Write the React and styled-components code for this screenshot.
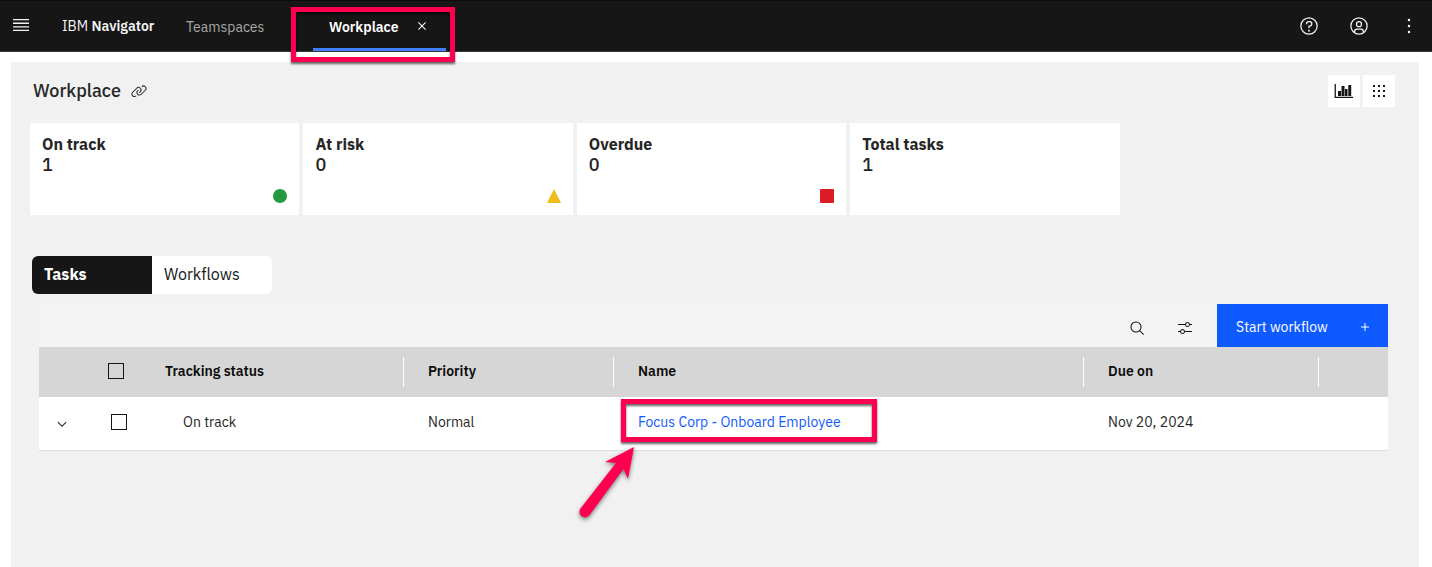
import React, { useState } from "react";
import styled, { createGlobalStyle } from "styled-components";

const GlobalStyle = createGlobalStyle`
  *, *::before, *::after { box-sizing: border-box; }
  body {
    margin: 0;
    background: #ffffff;
    color: #262626;
    font-family: "IBM Plex Sans", "Noto Sans", sans-serif;
    font-size: 14px;
    line-height: 20px;
  }
  button, input { font: inherit; color: inherit; }
  button { padding: 0; border: 0; background: none; cursor: pointer; }
  a { color: inherit; text-decoration: none; }
  h1, h2, p { margin: 0; }
  svg { display: block; fill: currentColor; }
`;

const Header = styled.header`
  display: flex;
  align-items: center;
  height: 52px;
  padding: 0 13px;
  background: #161616;
  border-top: 1px solid #0b0b0b;
  border-bottom: 1px solid #393939;
  color: #f4f4f4;
`;

const MenuButton = styled.button`
  padding-bottom: 2px;
`;

const Brand = styled.a`
  width: 124px;
  margin-left: 33px;
  white-space: nowrap;
  strong { font-weight: 600; }
`;

const Nav = styled.nav`
  display: flex;
  flex: 1;
  align-self: stretch;
`;

const Tab = styled.div`
  position: relative;
  display: flex;
  align-items: center;
  justify-content: space-between;
  width: ${(p) => (p.$active ? 133 : 127)}px;
  padding: ${(p) => (p.$active ? "2px 16px 0" : "2px 0 0")};
  color: ${(p) => (p.$active ? "#ffffff" : "#a8a8a8")};
  font-weight: ${(p) => (p.$active ? 600 : 400)};
  box-shadow: ${(p) => (p.$active ? "inset 0 -3px #4080ff" : "none")};
`;

const CloseButton = styled.button`
  padding-bottom: 2px;
`;

const HeaderActions = styled.div`
  display: flex;
  gap: 30px;
`;

const Highlight = styled.span`
  position: absolute;
  inset: ${(p) => p.$inset};
  border: 5px solid #ff0050;
  filter: drop-shadow(0 2px 1px rgba(0, 0, 0, 0.6));
  pointer-events: none;
`;

const Arrow = styled.svg`
  position: absolute;
  top: 45px;
  left: -60px;
  filter: drop-shadow(0 2px 2px rgba(0, 0, 0, 0.5));
  pointer-events: none;
`;

const Panel = styled.main`
  min-height: calc(100vh - 62px);
  margin: 10px 13px 0 11px;
  padding: 13px 24px 24px 19px;
  background: #f1f1f1;
`;

const TitleBar = styled.div`
  display: flex;
  align-items: center;
  padding-left: 3px;
  gap: 10px;
`;

const Title = styled.h1`
  font-size: 18px;
  line-height: 24px;
  font-weight: 500;
`;

const ViewButtons = styled.div`
  display: flex;
  gap: 3px;
  margin-left: auto;
`;

const ViewButton = styled.button`
  display: grid;
  place-items: center;
  width: 32px;
  height: 32px;
  background: #ffffff;
  color: #161616;
`;

const Cards = styled.div`
  display: grid;
  grid-template-columns: repeat(5, 1fr);
  gap: 4px;
  margin: 16px 2px 0 0;
`;

const Card = styled.section`
  display: flex;
  flex-direction: column;
  height: 92px;
  padding: 12px;
  background: #ffffff;
  h2 { margin-bottom: 2px; font-size: 16px; line-height: 18px; font-weight: 700; }
  p { font-size: 18px; font-weight: 500; }
  svg { margin: auto 0 0 auto; }
`;

const Switcher = styled.div`
  display: inline-flex;
  margin: 41px 0 9px 2px;
  border-radius: 6px;
  overflow: hidden;
`;

const SwitchButton = styled.button`
  width: 120px;
  height: 38px;
  padding: 0 12px 2px;
  text-align: left;
  font-size: 16px;
  background: ${(p) => (p.$selected ? "#161616" : "#ffffff")};
  color: ${(p) => (p.$selected ? "#ffffff" : "#161616")};
  font-weight: ${(p) => (p.$selected ? 700 : 400)};
`;

const TaskArea = styled.section`
  margin: 0 7px 0 9px;
`;

const Toolbar = styled.div`
  display: flex;
  justify-content: flex-end;
  height: 44px;
  padding-top: 1px;
  background: #f4f4f4;
`;

const ToolButton = styled.button`
  display: grid;
  place-items: center;
  width: 48px;
  padding-top: 4px;
  color: #161616;
`;

const StartButton = styled.button`
  display: flex;
  align-items: center;
  justify-content: space-between;
  width: 171px;
  margin-left: 8px;
  padding: 2px 15px 0 19px;
  background: #0f5afe;
  color: #ffffff;
`;

const Table = styled.table`
  width: 100%;
  table-layout: fixed;
  border-collapse: separate;
  border-spacing: 0;
`;

const HeadCell = styled.th`
  position: relative;
  width: ${(p) => p.$width || "auto"};
  height: 50px;
  padding: 0 0 2px ${(p) => p.$indent || "24px"};
  background: #d6d6d6;
  color: #0c0c0c;
  text-align: left;
  font-weight: 600;
  &::after {
    content: "";
    display: ${(p) => (p.$divider ? "block" : "none")};
    position: absolute;
    top: 10px;
    right: 0;
    width: 1px;
    height: 30px;
    background: #ffffff;
  }
`;

const Cell = styled.td`
  position: relative;
  height: 54px;
  padding: 0 0 4px ${(p) => p.$indent || "24px"};
  background: #ffffff;
  border-bottom: 1px solid #dcdcdc;
`;

const ExpandButton = styled.button`
  display: block;
  padding-top: 4px;
`;

const Checkbox = styled.input.attrs({ type: "checkbox" })`
  appearance: none;
  display: block;
  width: 16px;
  height: 16px;
  margin: 0;
  border: 1px solid #161616;
`;

const TaskLink = styled.a`
  color: #0f5afe;
`;

function Icon({ size = 20, children }) {
  return (
    <svg width={size} height={size} viewBox="0 0 32 32" aria-hidden="true">
      {children}
    </svg>
  );
}

const MenuIcon = () => (
  <svg width="16" height="12" viewBox="0 0 16 12" aria-hidden="true">
    <path d="M0 0h16v1.300H0zM0 3.600h16v1.300H0zM0 7.200h16v1.300H0zM0 10.700h16V12H0z" />
  </svg>
);

const CloseIcon = () => (
  <Icon size={16}>
    <path d="M24 9.4 22.6 8 16 14.6 9.4 8 8 9.4 14.6 16 8 22.6 9.4 24 16 17.4 22.6 24 24 22.6 17.4 16z" />
  </Icon>
);

const HelpIcon = () => (
  <Icon>
    <path d="M16 2a14 14 0 1 0 14 14A14 14 0 0 0 16 2zm0 26a12 12 0 1 1 12-12 12 12 0 0 1-12 12z" />
    <circle cx="16" cy="23.5" r="1.5" />
    <path d="M17 8h-1.500a4.490 4.490 0 0 0-4.500 4.500v.5h2v-.5a2.500 2.500 0 0 1 2.500-2.500H17a2.500 2.500 0 0 1 0 5h-2v4.500h2V17a4.500 4.500 0 0 0 0-9z" />
  </Icon>
);

const UserIcon = () => (
  <Icon>
    <path d="M16 8a5 5 0 1 0 5 5 5 5 0 0 0-5-5zm0 8a3 3 0 1 1 3-3 3 3 0 0 1-3 3z" />
    <path d="M16 2a14 14 0 1 0 14 14A14.016 14.016 0 0 0 16 2zm-6 24.377V25a3 3 0 0 1 3-3h6a3 3 0 0 1 3 3v1.377a11.899 11.899 0 0 1-12 0zm13.993-1.451A5.002 5.002 0 0 0 19 20h-6a5.002 5.002 0 0 0-4.992 4.926 12 12 0 1 1 15.985 0z" />
  </Icon>
);

const KebabIcon = () => (
  <Icon>
    <circle cx="16" cy="6.400" r="2" />
    <circle cx="16" cy="16" r="2" />
    <circle cx="16" cy="25.600" r="2" />
  </Icon>
);

const LinkIcon = () => (
  <Icon size={16}>
    <path d="M29.250 6.760a6 6 0 0 0-8.500 0l1.420 1.420a4 4 0 1 1 5.670 5.670l-8 8a4 4 0 1 1-5.670-5.660l1.410-1.420-1.410-1.420-1.420 1.420a6 6 0 0 0 0 8.500A6 6 0 0 0 17 25a6 6 0 0 0 4.270-1.760l8-8a6 6 0 0 0-.02-8.480z" />
    <path d="M4.190 24.820a4 4 0 0 1 0-5.670l8-8a4 4 0 0 1 5.670 0A3.940 3.940 0 0 1 19 14a4 4 0 0 1-1.170 2.850L15.710 19l1.420 1.420 2.120-2.120a6 6 0 0 0-8.510-8.510l-8 8a6 6 0 0 0 0 8.510A6 6 0 0 0 7 28a6.070 6.070 0 0 0 4.280-1.760l-1.420-1.420a4 4 0 0 1-5.670 0z" />
  </Icon>
);

const ChartIcon = () => (
  <svg width="20" height="16" viewBox="0 0 20 16" aria-hidden="true">
    <path d="M.6 1h1.300v12.700H19v1.300H.6zM4 8h3v5H4zM7.500 3h3v10h-3zM11 6h2.500v7H11zM14.300 2h2.900v11h-2.900z" />
  </svg>
);

const GridIcon = () => (
  <svg width="12" height="12" viewBox="0 0 12 12" aria-hidden="true">
    <path d="M0 0h2v2H0zM5 0h2v2H5zM10 0h2v2h-2zM0 5h2v2H0zM5 5h2v2H5zM10 5h2v2h-2zM0 10h2v2H0zM5 10h2v2H5zM10 10h2v2h-2z" />
  </svg>
);

const SearchIcon = () => (
  <Icon size={16}>
    <path d="m30 28.586-7.552-7.552a11.018 11.018 0 1 0-1.414 1.414L28.586 30zM5 14a9 9 0 1 1 9 9 9.010 9.010 0 0 1-9-9z" />
  </Icon>
);

const FilterIcon = () => (
  <Icon size={16}>
    <path d="M30 8h-4.100a5 5 0 0 0-9.800 0H2v2h14.100a5 5 0 0 0 9.800 0H30zm-9 4a3 3 0 1 1 3-3 3 3 0 0 1-3 3zM2 24h4.100a5 5 0 0 0 9.800 0H30v-2H15.900a5 5 0 0 0-9.800 0H2zm9-4a3 3 0 1 1-3 3 3 3 0 0 1 3-3z" />
  </Icon>
);

const AddIcon = () => (
  <Icon size={16}>
    <path d="M17 15V8h-2v7H8v2h7v7h2v-7h7v-2z" />
  </Icon>
);

const ChevronIcon = () => (
  <Icon size={16}>
    <path d="M16 22 7 13l1.400-1.400 7.600 7.600 7.600-7.600L25 13z" />
  </Icon>
);

const cards = [
  { label: "On track", count: 1, color: "#24993f", shape: <circle cx="7" cy="7" r="7" /> },
  { label: "At risk", count: 0, color: "#f1bc1b", shape: <path d="M7 0l7 14H0z" /> },
  { label: "Overdue", count: 0, color: "#d91c25", shape: <rect width="14" height="14" rx="1" /> },
  { label: "Total tasks", count: 1 },
];

export default function App() {
  const [view, setView] = useState("Tasks");
  return (
    <>
      <GlobalStyle />
      <Header>
        <MenuButton aria-label="Open menu"><MenuIcon /></MenuButton>
        <Brand href="#">IBM <strong>Navigator</strong></Brand>
        <Nav>
          <Tab><a href="#teamspaces">Teamspaces</a></Tab>
          <Tab $active>
            <a href="#workplace">Workplace</a>
            <CloseButton aria-label="Close Workplace"><CloseIcon /></CloseButton>
            <Highlight $inset="6px -9px -11px -22px" />
          </Tab>
        </Nav>
        <HeaderActions>
          <button aria-label="Help"><HelpIcon /></button>
          <button aria-label="Account"><UserIcon /></button>
          <button aria-label="More options"><KebabIcon /></button>
        </HeaderActions>
      </Header>
      <Panel>
        <TitleBar>
          <Title>Workplace</Title>
          <button aria-label="Copy link"><LinkIcon /></button>
          <ViewButtons>
            <ViewButton aria-label="Chart view"><ChartIcon /></ViewButton>
            <ViewButton aria-label="Grid view"><GridIcon /></ViewButton>
          </ViewButtons>
        </TitleBar>
        <Cards>
          {cards.map((card) => (
            <Card key={card.label}>
              <h2>{card.label}</h2>
              <p>{card.count}</p>
              {card.shape && (
                <svg width="14" height="14" viewBox="0 0 14 14" color={card.color} aria-hidden="true">
                  {card.shape}
                </svg>
              )}
            </Card>
          ))}
        </Cards>
        <Switcher>
          {["Tasks", "Workflows"].map((name) => (
            <SwitchButton key={name} $selected={view === name} aria-pressed={view === name} onClick={() => setView(name)}>
              {name}
            </SwitchButton>
          ))}
        </Switcher>
        <TaskArea>
          <Toolbar>
            <ToolButton aria-label="Search"><SearchIcon /></ToolButton>
            <ToolButton aria-label="Filter"><FilterIcon /></ToolButton>
            <StartButton>Start workflow <AddIcon /></StartButton>
          </Toolbar>
          <Table>
            <thead>
              <tr>
                <HeadCell $width="48px" />
                <HeadCell $width="54px" $indent="21px"><Checkbox aria-label="Select all tasks" /></HeadCell>
                <HeadCell $width="263px" $divider>Tracking status</HeadCell>
                <HeadCell $width="210px" $divider>Priority</HeadCell>
                <HeadCell $divider>Name</HeadCell>
                <HeadCell $width="235px" $divider>Due on</HeadCell>
                <HeadCell $width="69px" />
              </tr>
            </thead>
            <tbody>
              <tr>
                <Cell $indent="15px"><ExpandButton aria-label="Expand row"><ChevronIcon /></ExpandButton></Cell>
                <Cell><Checkbox aria-label="Select Focus Corp - Onboard Employee" /></Cell>
                <Cell $indent="42px">On track</Cell>
                <Cell>Normal</Cell>
                <Cell>
                  <TaskLink href="#task">Focus Corp - Onboard Employee</TaskLink>
                  <Highlight $inset="2px 207px 8px 7px" />
                  <Arrow width="90" height="90" viewBox="554 442 90 90" color="#ff0050" aria-hidden="true">
                    <path d="M634 447 628 479 623.500 469 589.500 515a5.500 5.500 0 0 1-9-6.500L616 463 605 462z" />
                  </Arrow>
                </Cell>
                <Cell>Nov 20, 2024</Cell>
                <Cell />
              </tr>
            </tbody>
          </Table>
        </TaskArea>
      </Panel>
    </>
  );
}
